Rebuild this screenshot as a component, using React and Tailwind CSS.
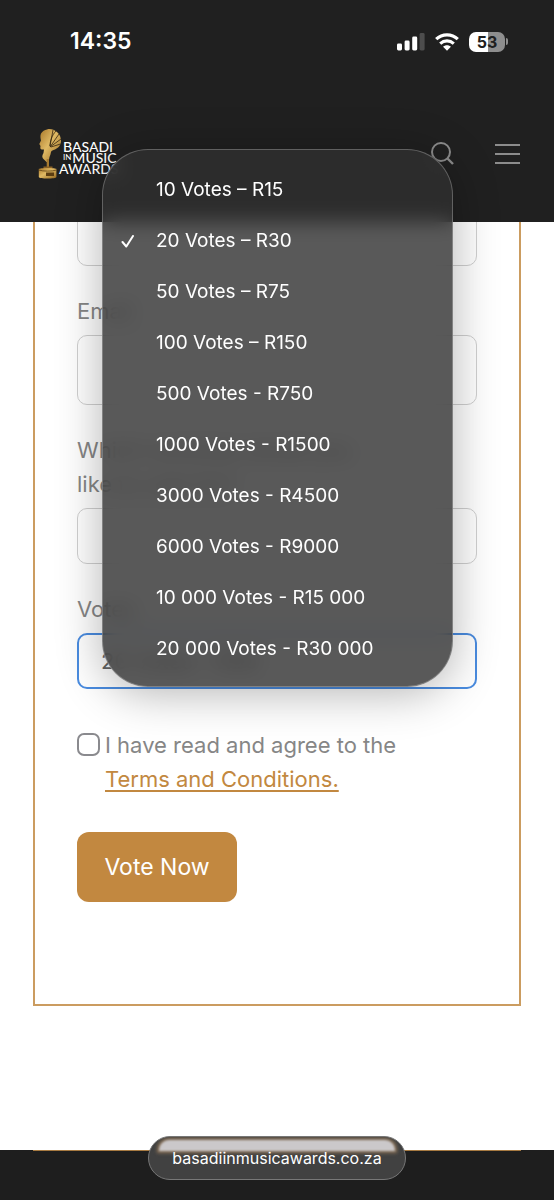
import React, { useState } from "react";

const VOTE_OPTIONS = [
  "10 Votes – R15",
  "20 Votes – R30",
  "50 Votes – R75",
  "100 Votes – R150",
  "500 Votes - R750",
  "1000 Votes - R1500",
  "3000 Votes - R4500",
  "6000 Votes - R9000",
  "10 000 Votes - R15 000",
  "20 000 Votes - R30 000",
];

function SignalIcon() {
  return (
    <svg width="28" height="18" viewBox="0 0 28 18" aria-hidden="true">
      <rect x="0" y="10.5" width="5" height="7" rx="1.4" fill="#fff" />
      <rect x="7.6" y="7.5" width="5" height="10" rx="1.4" fill="#fff" />
      <rect x="15.2" y="3.5" width="5" height="14" rx="1.4" fill="#fff" />
      <rect x="22.6" y="0" width="5" height="17.5" rx="1.4" fill="#4d4d4d" />
    </svg>
  );
}

function WifiIcon() {
  return (
    <svg width="24" height="18" viewBox="0 0 24 18" fill="none" aria-hidden="true">
      <path d="M1.2 6.2C7.2.5 16.800.5 22.800 6.200" stroke="#fff" strokeWidth="3.2" />
      <path d="M5.2 10.600c4-3.600 9.600-3.600 13.600 0" stroke="#fff" strokeWidth="3.1" />
      <path d="M8.1 13.8c2.200-2 5.600-2 7.800 0L12 17.800z" fill="#fff" />
    </svg>
  );
}

function Battery() {
  return (
    <div className="flex items-center gap-px">
      <div className="flex h-5 w-9 items-center justify-center rounded-[7px] bg-linear-to-r from-white from-53% to-[#8e8e8e] to-53% text-base font-bold text-[#202020]">
        53
      </div>
      <div className="h-[7px] w-[2px] rounded-r-full bg-[#8e8e8e]" />
    </div>
  );
}

function Trophy() {
  return (
    <svg width="24" height="51" viewBox="0 0 24 51" aria-hidden="true">
      <defs>
        <linearGradient id="gold" x1="0" y1="0" x2="1" y2="1">
          <stop offset="0" stopColor="#a9782a" />
          <stop offset=".45" stopColor="#dfb964" />
          <stop offset="1" stopColor="#94671f" />
        </linearGradient>
      </defs>
      <path
        d="M9 1.500C12 .5 16 1.500 19 4c3 2.500 4 6 4 9 0 4-2.500 7-6 8.500-2 .8-3.500 1-4 2.500-.3 2-.8 3.500-1.500 5L10.500 34H8.500L5 30.500c-1-1.500-1-3 .5-5.500l.5-3.500c-2 .3-3.500 0-3.700-1.500l.2-2L1.300 16 3 12.500C2.500 10 2 8 3 5.500 4.500 3 6.500 2 9 1.500z"
        fill="url(#gold)"
      />
      <path
        d="M12 19 21 6M12 18l3-16M12 19l11-8M13 19l9.500-3M12 18c0-5 2-11 6-15"
        stroke="#33240f"
        strokeWidth=".8"
        fill="none"
      />
      <path d="M8.700 31h2.300v9H8.700z" fill="#a67a30" />
      <path d="M5.500 38.500h9v3h-9z" fill="#8a6124" />
      <path d="M.8 41c0-1.500 17.600-1.500 17.600 0v8c0 2-17.600 2-17.600 0z" fill="url(#gold)" />
      <path d="M.8 42c4 1.500 13.600 1.500 17.600 0" stroke="#5b3d12" strokeWidth=".8" fill="none" />
      <path d="M8 44.500h8v3.500H8z" fill="#5b3d12" />
    </svg>
  );
}

function Logo() {
  return (
    <a href="#home" className="flex font-[Lato,sans-serif] text-white">
      <Trophy />
      <span className="-ml-[3px] mt-[13px] flex flex-col text-sm leading-[11px] font-medium whitespace-nowrap">
        <span className="pl-1">BASADI</span>
        <span className="flex items-center gap-px pl-1">
          <span className="text-[8px] font-normal">IN</span>
          <span>MUSIC</span>
        </span>
        <span>AWARDS</span>
      </span>
    </a>
  );
}

function Header() {
  return (
    <header className="relative z-10 bg-[#202020] pb-[43px]">
      <div className="flex h-[83px] items-center justify-between pr-[46px] pl-[70px]">
        <time className="text-[23px] font-semibold text-white">14:35</time>
        <div className="flex items-center gap-[10px]">
          <SignalIcon />
          <WifiIcon />
          <Battery />
        </div>
      </div>
      <div className="flex items-center justify-between pt-[45px] pr-[34px] pl-[38px]">
        <Logo />
        <div className="flex items-center gap-[41px]">
          <button type="button" aria-label="Search">
            <svg width="23" height="23" viewBox="0 0 23 23" fill="none" stroke="#8c8c8c" strokeWidth="2" aria-hidden="true">
              <circle cx="10" cy="10" r="9" />
              <path d="m16 16 6 6" strokeWidth="2.400" />
            </svg>
          </button>
          <button type="button" aria-label="Menu">
            <svg width="25" height="20" viewBox="0 0 25 20" stroke="#8c8c8c" strokeWidth="2" aria-hidden="true">
              <path d="M0 1h25M0 10h25M0 19h25" />
            </svg>
          </button>
        </div>
      </div>
    </header>
  );
}

const FIELD = "block w-full appearance-none rounded-[10px] border bg-white px-[22px] text-[#666] outline-none";

function Field({ id, label, children }) {
  return (
    <div className="flex flex-col gap-[7px]">
      <label htmlFor={id}>{label}</label>
      {children}
    </div>
  );
}

function VoteMenu({ selected, onSelect }) {
  return (
    <div
      role="listbox"
      aria-label="Vote packages"
      className="absolute top-[149px] right-[101px] left-[102px] z-20 rounded-[46px] border border-white/25 bg-[#2f2f2f]/80 pt-[15px] pb-[11px] shadow-[0_6px_46px_rgba(0,0,0,0.3)] backdrop-blur-[10px]"
    >
      {VOTE_OPTIONS.map((option) => (
        <button
          key={option}
          type="button"
          role="option"
          aria-selected={option === selected}
          onClick={() => onSelect(option)}
          className="flex h-[51px] w-full items-center pl-[18px] text-left text-[19px] text-white"
        >
          <span className="w-[35px]">
            {option === selected && (
              <svg width="14" height="14" viewBox="0 0 14 14" fill="none" stroke="#fff" strokeWidth="2" strokeLinecap="round" strokeLinejoin="round" aria-hidden="true">
                <path d="m1.500 7 3.800 4.500L12 1" />
              </svg>
            )}
          </span>
          {option}
        </button>
      ))}
    </div>
  );
}

export default function App() {
  const [votes, setVotes] = useState("20 Votes – R30");
  return (
    <div className="relative flex min-h-screen flex-col overflow-hidden bg-white font-[Inter,sans-serif]">
      <Header />
      <main className="flex-1 px-[33px] pb-36">
        <form
          onSubmit={(e) => e.preventDefault()}
          className="-mt-4 border-2 border-[#cb9c60] px-[42px] pb-[102px] text-[22px] leading-[34px] text-[#868686]"
        >
          <div className="flex flex-col gap-7">
            <input aria-label="Name" className={`${FIELD} h-[58px] border-[#d0d0d0]`} />
            <Field id="email" label="Email">
              <input id="email" type="email" className={`${FIELD} h-[70px] border-[#d0d0d0]`} />
            </Field>
            <Field
              id="nominee"
              label={
                <>
                  Which nominee would you
                  <br />
                  like to vote for?
                </>
              }
            >
              <select id="nominee" className={`${FIELD} h-14 border-[#d0d0d0]`} />
            </Field>
            <Field id="votes" label="Votes">
              <select
                id="votes"
                value={votes}
                onChange={(e) => setVotes(e.target.value)}
                className={`${FIELD} h-14 border-2 border-[#4a8ce0]`}
              >
                {VOTE_OPTIONS.map((option) => (
                  <option key={option}>{option}</option>
                ))}
              </select>
            </Field>
          </div>
          <div className="mt-[39px] flex items-start gap-[5px]">
            <input
              id="terms"
              type="checkbox"
              className="mt-[5px] size-[23px] shrink-0 appearance-none rounded-[7px] border-2 border-[#8a8a8e] bg-white checked:bg-[#c28840]"
            />
            <label htmlFor="terms">
              I have read and agree to the
              <br />
              <a href="#terms" className="text-[#c28840] underline decoration-2 underline-offset-3">
                Terms and Conditions.
              </a>
            </label>
          </div>
          <button
            type="submit"
            className="mt-9 h-[70px] w-40 rounded-[12px] bg-[#c28840] text-[23px] font-normal text-white"
          >
            Vote Now
          </button>
        </form>
      </main>
      <footer className="h-[50px] bg-[#1e1e1e] px-[33px]">
        <div className="h-px bg-[#a87b42]" />
      </footer>
      <VoteMenu selected={votes} onSelect={setVotes} />
      <div className="absolute bottom-5 left-1/2 z-20 flex h-11 w-[258px] -translate-x-1/2 items-center justify-center overflow-hidden rounded-full border border-[#777] bg-[#414141] text-base text-white">
        <div className="absolute inset-x-[10px] top-[3px] h-[11px] rounded-t-[10px] bg-[#cbc8ca] shadow-[0_0_3px_2px_#8c7357] blur-[1px]" />
        <span className="relative">basadiinmusicawards.co.za</span>
      </div>
    </div>
  );
}
